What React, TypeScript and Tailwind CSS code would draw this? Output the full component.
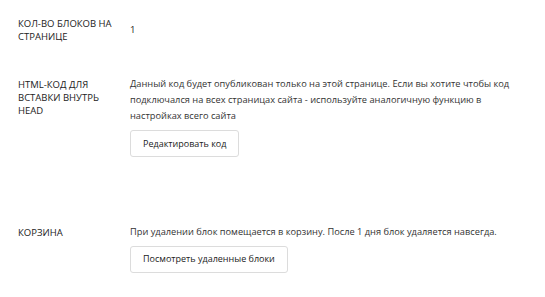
import React from 'react';

const font = { fontFamily: '"Open Sans", "Noto Sans", sans-serif' };

function Row({ label, children, className = '', labelClass = '' }: { label: string; children: React.ReactNode; className?: string; labelClass?: string }) {
  return (
    <div className={`flex ${className}`}>
      <div className={`w-[112px] shrink-0 pr-2 text-[9.5px] leading-[13px] uppercase text-[#222] ${labelClass}`}>{label}</div>
      <div className="w-[385px]">{children}</div>
    </div>
  );
}

function Button({ children }: { children: React.ReactNode }) {
  return (
    <button className="h-[27px] px-[12px] border border-[#dcdcdc] rounded-[3px] bg-white text-[9px] text-[#222]">
      {children}
    </button>
  );
}

export default function App() {
  return (
    <div className="w-[545px] h-[297px] bg-white pl-[18px] pt-[17px]" style={font}>
      <Row label="Кол-во блоков на странице">
        <div className="pt-[6px] text-[9.5px] leading-[13px] text-[#222]">1</div>
      </Row>

      <Row label="HTML-код для вставки внутрь head" className="mt-[33px]" labelClass="pt-[2px]">
        <p className="text-[9.25px] leading-[16px] text-[#333]">
          Данный код будет опубликован только на этой странице. Если вы хотите чтобы код подключался на всех страницах сайта - используйте аналогичную функцию в настройках всего сайта
        </p>
        <div className="mt-[5px]">
          <Button>Редактировать код</Button>
        </div>
      </Row>

      <Row label="Корзина" className="mt-[67px]" labelClass="pt-[2px]">
        <p className="text-[9.25px] leading-[16px] text-[#333]">
          При удалении блок помещается в корзину. После 1 дня блок удаляется навсегда.
        </p>
        <div className="mt-[4px]">
          <Button>Посмотреть удаленные блоки</Button>
        </div>
      </Row>
    </div>
  );
}
